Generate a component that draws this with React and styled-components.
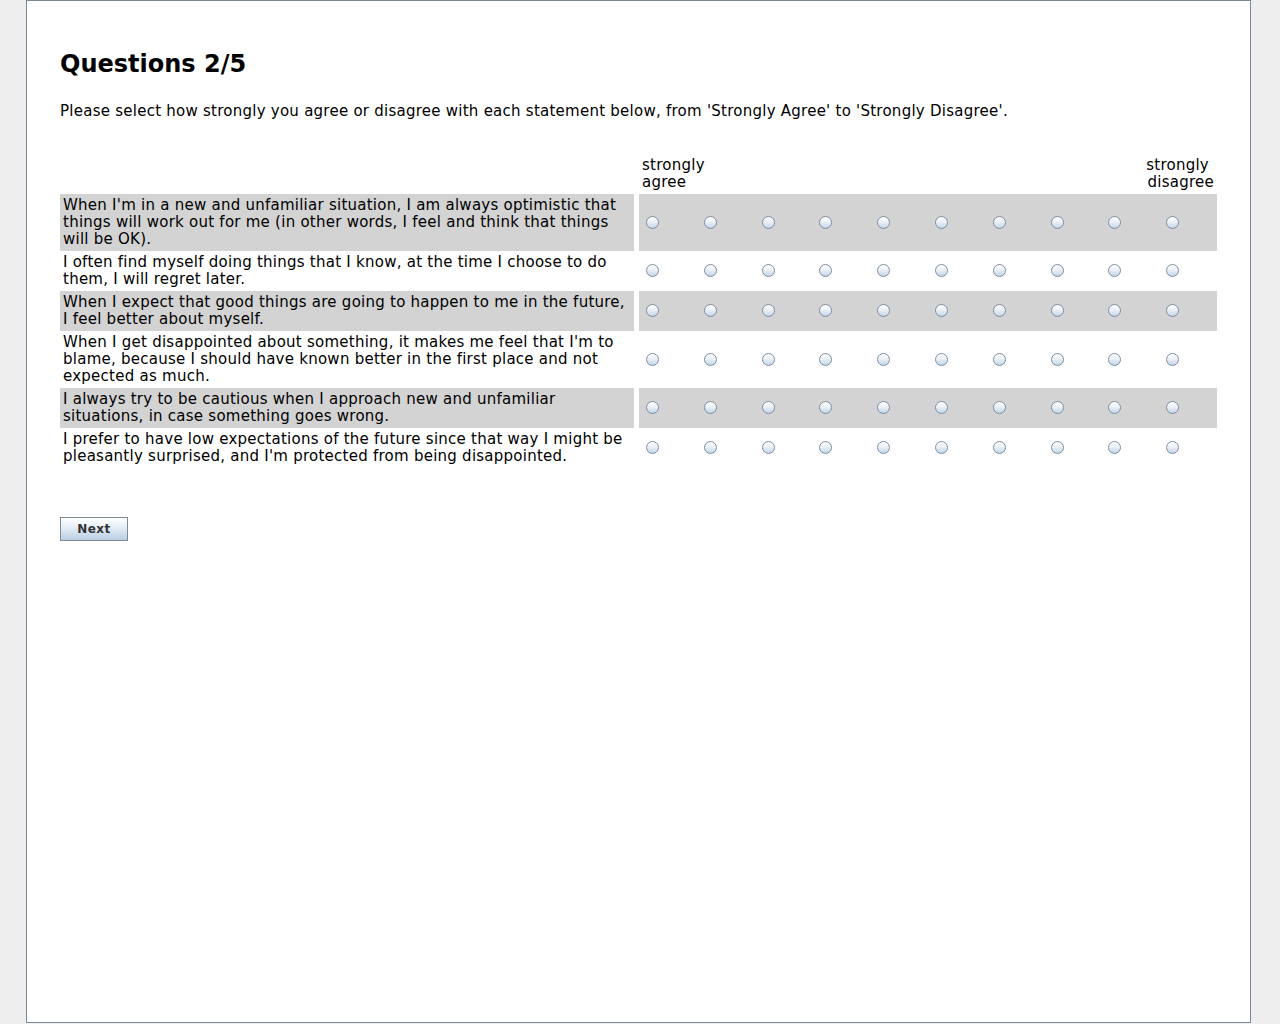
import styled, { createGlobalStyle } from 'styled-components'

const GlobalStyle = createGlobalStyle`
	html, body {
		margin: 0;
		padding: 0;
		background: #eeeeee;
	}
	body {
		font-family: 'DejaVu Sans', Verdana, sans-serif;
		font-size: 15px;
		letter-spacing: 0.25px;
		color: #000;
	}
`

const Panel = styled.main`
	box-sizing: border-box;
	margin-left: 26px;
	width: 1225px;
	height: 1023px;
	background: #fff;
	border: 1px solid #7a8a99;
	padding: 49px 32px 0 33px;
`

const Title = styled.h1`
	margin: 0;
	font-size: 24px;
	line-height: 28px;
	font-weight: bold;
	letter-spacing: 0;
`

const Intro = styled.p`
	margin: 25px 0 0;
	line-height: 17px;
`

const Table = styled.section`
	margin-top: 34px;
	width: 1157px;
`

const Row = styled.div`
	display: grid;
	grid-template-columns: 574px 578px;
	column-gap: 5px;
`

const Question = styled.div`
	background: ${(p) => (p.$shaded ? '#d3d3d3' : 'transparent')};
	padding: 3px 3px 3px;
	line-height: 17px;
`

const Scale = styled.div`
	display: grid;
	grid-template-columns: repeat(10, 1fr);
	align-items: center;
	padding-bottom: 1px;
	background: ${(p) => (p.$shaded ? '#d3d3d3' : 'transparent')};
`

const HeadScale = styled.div`
	display: flex;
	justify-content: space-between;
	padding: 3px 3px 3px;
	line-height: 17px;
`

const HeadLabel = styled.div`
	text-align: ${(p) => p.$align};
`

const Cell = styled.label`
	display: flex;
	align-items: center;
	padding-left: 7px;
`

const Radio = styled.input`
	appearance: none;
	margin: 0;
	width: 13px;
	height: 13px;
	border-radius: 50%;
	border: 1px solid #7d8ea0;
	box-sizing: border-box;
	background: linear-gradient(180deg, #ffffff 0%, #eef3f9 40%, #c4d5e8 100%);

	&:checked {
		background: radial-gradient(circle, #1f2f44 0 2.5px, transparent 3px),
			linear-gradient(180deg, #ffffff 0%, #eef3f9 40%, #c4d5e8 100%);
	}
`

const NextButton = styled.button`
	margin-top: 49px;
	width: 68px;
	height: 24px;
	padding: 0;
	border: 1px solid #7a8a99;
	background: linear-gradient(180deg, #ffffff 0%, #e3ecf5 45%, #b9cee3 100%);
	font-family: 'DejaVu Sans', Verdana, sans-serif;
	font-size: 12px;
	font-weight: bold;
	color: #333;
	letter-spacing: 0.5px;
`

const questions = [
	"When I'm in a new and unfamiliar situation, I am always optimistic that things will work out for me (in other words, I feel and think that things will be OK).",
	'I often find myself doing things that I know, at the time I choose to do them, I will regret later.',
	'When I expect that good things are going to happen to me in the future, I feel better about myself.',
	"When I get disappointed about something, it makes me feel that I'm to blame, because I should have known better in the first place and not expected as much.",
	'I always try to be cautious when I approach new and unfamiliar situations, in case something goes wrong.',
	"I prefer to have low expectations of the future since that way I might be pleasantly surprised, and I'm protected from being disappointed.",
]

export default function App() {
	return (
		<>
			<GlobalStyle />
			<Panel>
				<Title>Questions 2/5</Title>
				<Intro>
					Please select how strongly you agree or disagree with each statement below,
					from 'Strongly Agree' to 'Strongly Disagree'.
				</Intro>
				<Table>
					<Row>
						<div />
						<HeadScale>
							<HeadLabel $align='left'>
								strongly
								<br />
								agree
							</HeadLabel>
							<HeadLabel $align='right'>
								strongly&nbsp;
								<br />
								disagree
							</HeadLabel>
						</HeadScale>
					</Row>
					{questions.map((q, i) => (
						<Row key={i}>
							<Question $shaded={i % 2 === 0}>{q}</Question>
							<Scale $shaded={i % 2 === 0}>
								{Array.from({ length: 10 }, (_, k) => (
									<Cell key={k}>
										<Radio type='radio' name={`q${i}`} value={k + 1} />
									</Cell>
								))}
							</Scale>
						</Row>
					))}
				</Table>
				<NextButton type='button'>Next</NextButton>
			</Panel>
		</>
	)
}
